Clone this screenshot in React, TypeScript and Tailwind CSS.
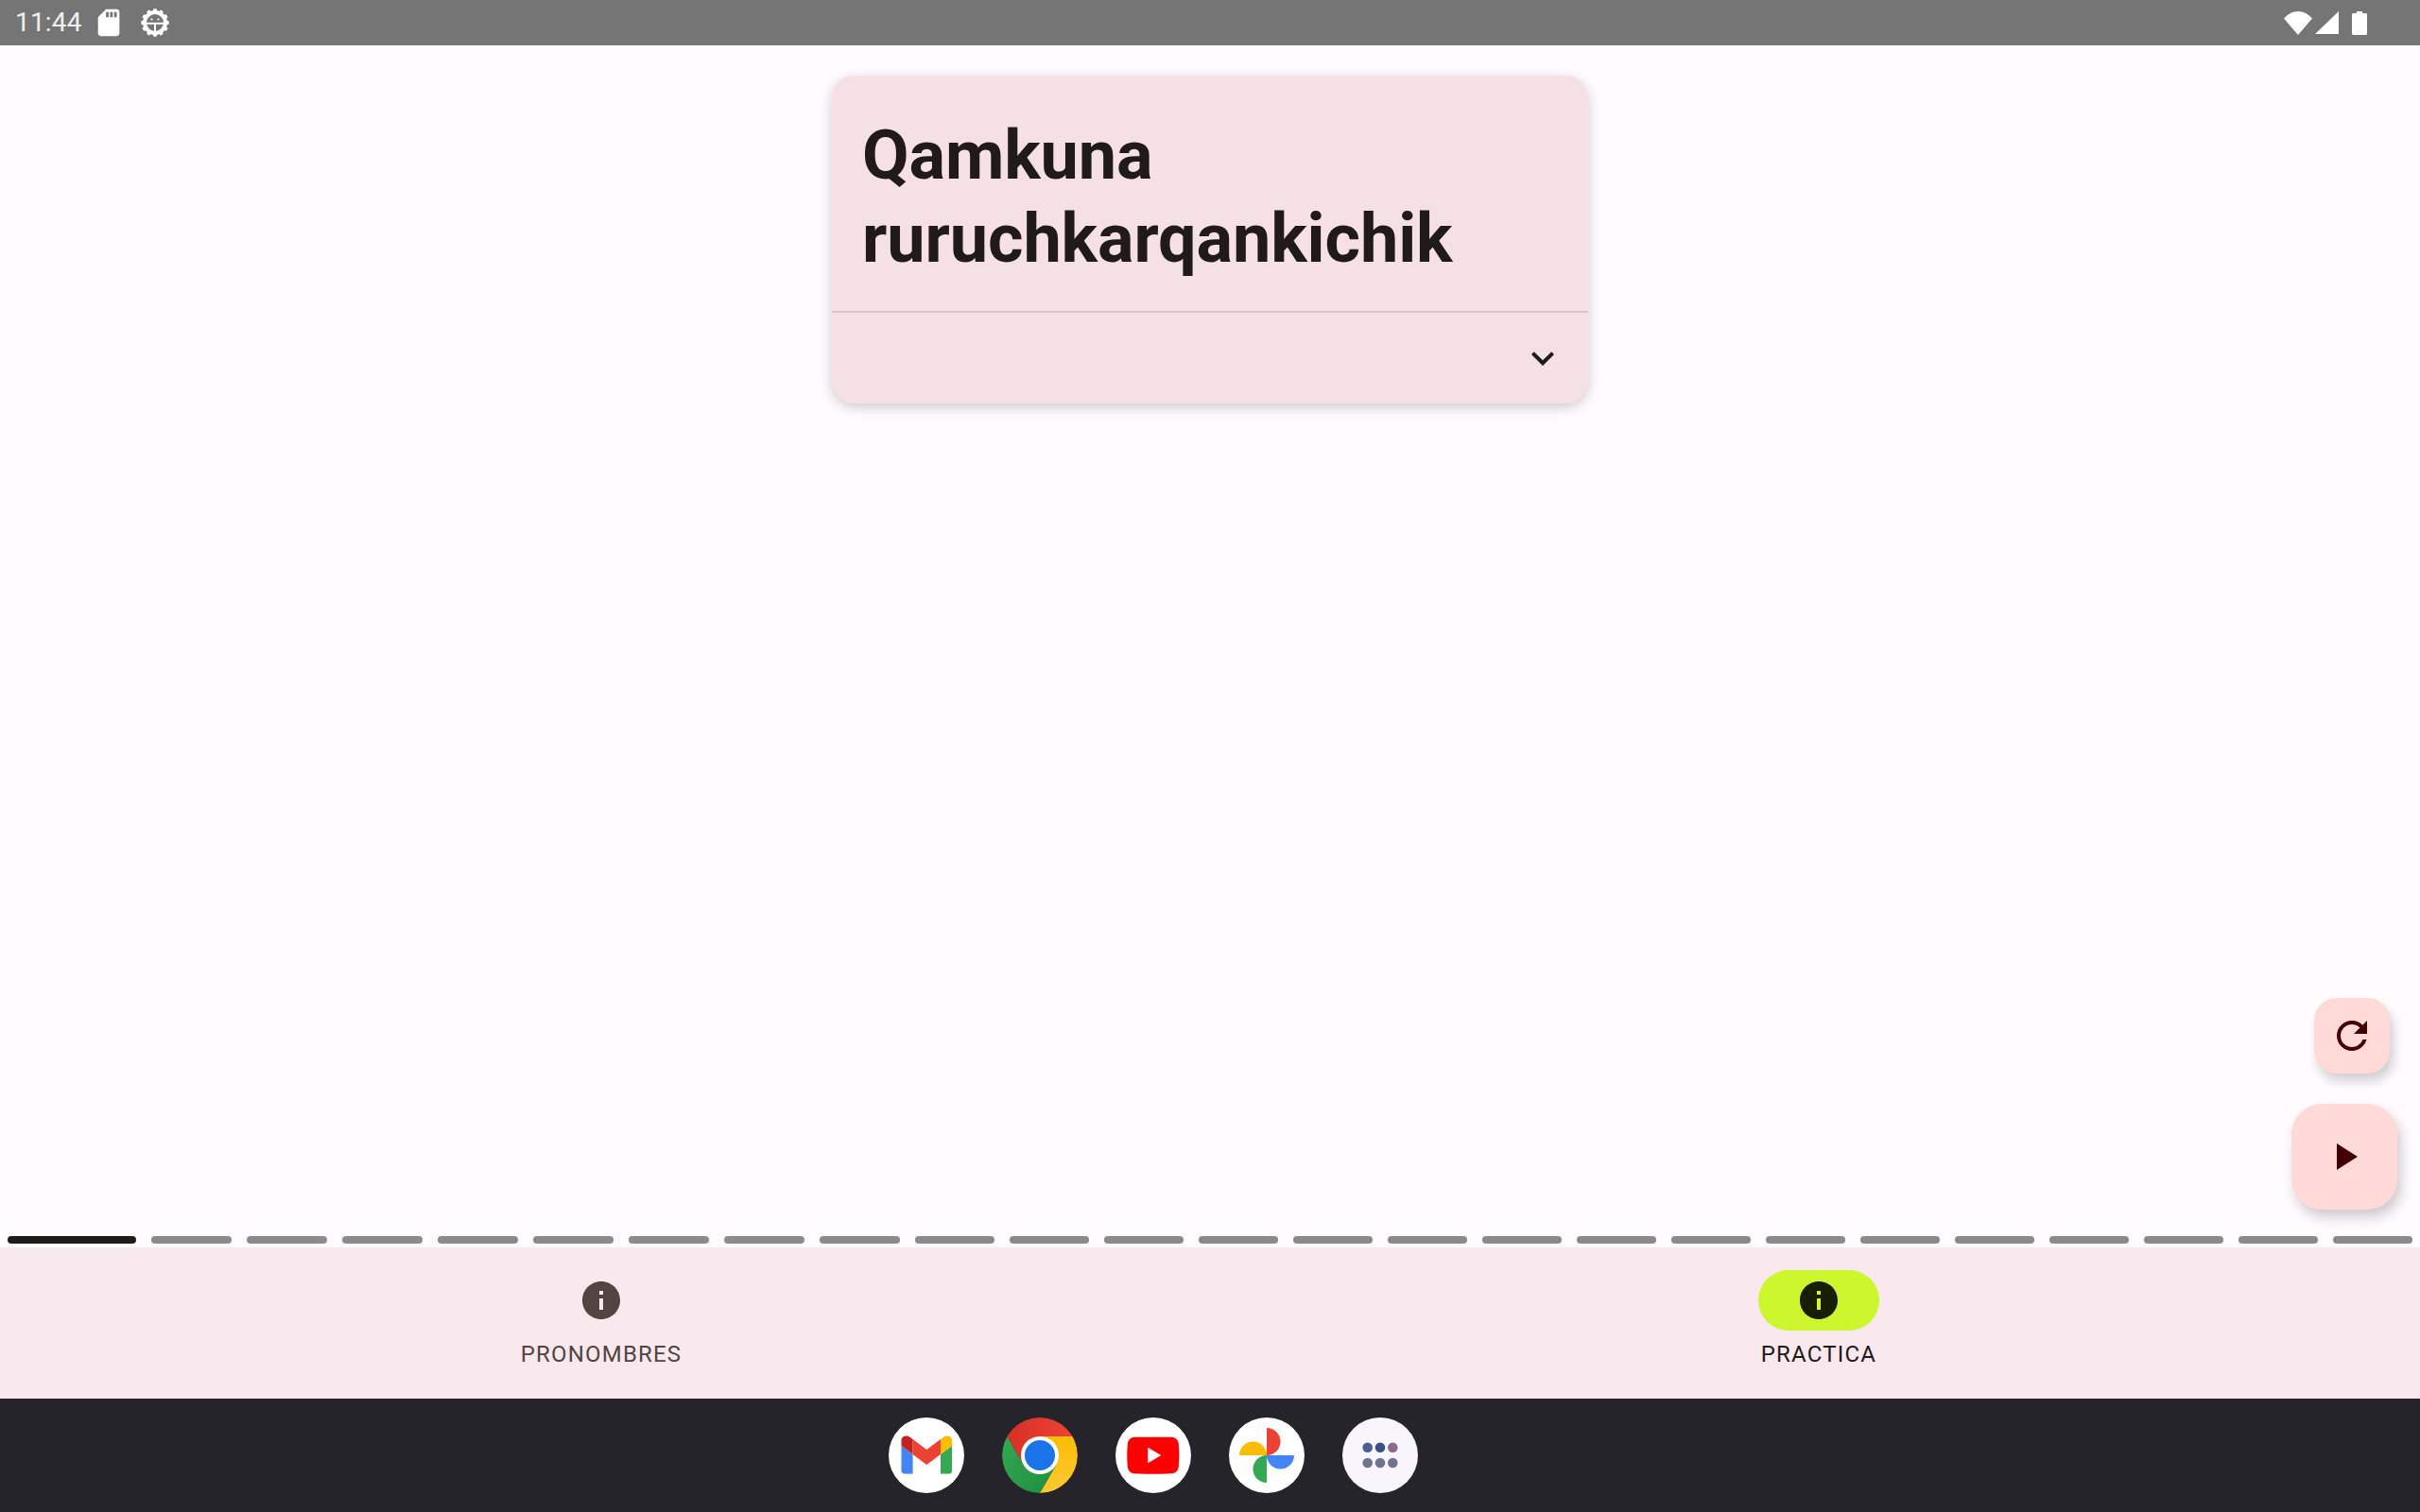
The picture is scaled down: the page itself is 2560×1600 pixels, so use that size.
import React from "react";

const INFO = "M12 2C6.48 2 2 6.48 2 12s4.48 10 10 10 10-4.48 10-10S17.52 2 12 2zm1 15h-2v-6h2v6zm0-8h-2V7h2v2z";

function Gear() {
  const teeth = Array.from({ length: 12 }, (_, i) => i * 30);
  return (
    <svg width="30" height="30" viewBox="0 0 30 30" className="ml-[17px]">
      {teeth.map((a) => (
        <rect key={a} x="13.200" y="0.300" width="3.600" height="5" fill="#fff" transform={`rotate(${a} 15 15)`} />
      ))}
      <circle cx="15" cy="15" r="11" fill="none" stroke="#fff" strokeWidth="4" />
      <rect x="5" y="14.800" width="20" height="2" fill="#fff" />
      <rect x="14" y="15" width="2" height="9" fill="#fff" />
      <circle cx="11.500" cy="11.500" r="1.100" fill="#fff" />
      <circle cx="18.500" cy="11.500" r="1.100" fill="#fff" />
    </svg>
  );
}

function Info({ color }: { color: string }) {
  return (
    <svg width="48" height="48" viewBox="0 0 24 24" fill={color} className="block">
      <path d={INFO} />
    </svg>
  );
}

function DockCircle({ children, bg = "bg-white" }: { children: React.ReactNode; bg?: string }) {
  return (
    <div className={`w-20 h-20 rounded-full overflow-hidden ${bg}`}>
      <svg width="80" height="80" viewBox="0 0 80 80" className="block">
        {children}
      </svg>
    </div>
  );
}

export default function App() {
  const segments = Array.from({ length: 24 }, (_, i) => i);
  return (
    <div className="w-[2560px] h-[1600px] flex flex-col overflow-hidden bg-[#fffbff] font-['Roboto',sans-serif]">
      {/* status bar */}
      <div className="h-12 shrink-0 bg-[#757575] flex items-center pl-[16px] pr-[56px] text-[#f0f0f0]">
        <span className="text-[28px] leading-none tracking-[0.2px] w-[70px]">11:44</span>
        <svg width="34" height="34" viewBox="0 0 24 24" fill="#fff" className="ml-[12px]">
          <path d="M18 2h-8L4.02 8 4 20c0 1.1.9 2 2 2h12c1.1 0 2-.9 2-2V4c0-1.1-.9-2-2-2zm-6 6h-2V4h2v4zm3 0h-2V4h2v4zm3 0h-2V4h2v4z" />
        </svg>
        <Gear />
        <div className="ml-auto flex items-center">
          <svg width="30" height="25" viewBox="0 0 30 25" fill="#fff">
            <path d="M0 7.500C4 3 9.200 0 15 0s11 3 15 7.500L15 25z" />
          </svg>
          <svg width="25" height="24" viewBox="0 0 25 24" fill="#fff" className="ml-[3px]">
            <path d="M25 0v24H0z" />
          </svg>
          <svg width="16" height="25" viewBox="0 0 16 25" fill="#fff" className="ml-[14px]">
            <path d="M5 0h6v2h3.500c.8 0 1.500.7 1.500 1.500V23.500c0 .8-.7 1.500-1.500 1.500h-13C.7 25 0 24.300 0 23.500V3.500C0 2.700.7 2 1.500 2H5z" />
          </svg>
        </div>
      </div>

      {/* main */}
      <div className="relative flex-1 flex flex-col">
        <div className="w-[800px] mx-auto mt-8 rounded-[24px] bg-[#f5e0e5] shadow-[0_4px_14px_rgba(0,0,0,0.2)] overflow-hidden">
          <div className="pt-[41px] pb-[32px] px-8 text-[72px] leading-[88px] font-bold tracking-[-0.1px] text-[#201a19]">
            <div>Qamkuna</div>
            <div>ruruchkarqankichik</div>
          </div>
          <div className="h-[2px] bg-[#dcc6c7]" />
          <div className="h-[96px] flex items-center justify-end pr-6">
            <svg width="48" height="48" viewBox="0 0 24 24" fill="#201a19">
              <path d="M16.590 8.590 12 13.170 7.410 8.590 6 10l6 6 6-6z" />
            </svg>
          </div>
        </div>

        {/* FABs */}
        <div className="absolute right-6 bottom-10 flex flex-col items-end gap-8">
          <button className="w-20 h-20 mr-2 rounded-[24px] bg-[#ffdad6] flex items-center justify-center shadow-[4px_8px_12px_rgba(0,0,0,0.18)]">
            <svg width="48" height="48" viewBox="0 0 24 24" fill="#410002">
              <path d="M17.650 6.350C16.200 4.900 14.210 4 12 4c-4.420 0-7.990 3.580-7.990 8s3.570 8 7.990 8c3.730 0 6.840-2.550 7.730-6h-2.080c-.82 2.330-3.040 4-5.650 4-3.310 0-6-2.690-6-6s2.690-6 6-6c1.660 0 3.140.69 4.220 1.780L13 11h7V4l-2.350 2.350z" />
            </svg>
          </button>
          <button className="w-28 h-28 rounded-[32px] bg-[#ffdad6] flex items-center justify-center shadow-[4px_8px_14px_rgba(0,0,0,0.2)]">
            <svg width="48" height="48" viewBox="0 0 24 24" fill="#410002">
              <path d="M8 5v14l11-7z" />
            </svg>
          </button>
        </div>

        {/* progress */}
        <div className="mt-auto mb-1 px-2 flex gap-4">
          <div className="w-[136px] h-2 rounded-full bg-[#201a19]" />
          {segments.map((i) => (
            <div key={i} className={i < 8 ? "w-[85px] h-2 rounded-full bg-[#8f8a8a]" : "w-[84px] h-2 rounded-full bg-[#8f8a8a]"} />
          ))}
        </div>
      </div>

      {/* tabs */}
      <div className="h-40 shrink-0 bg-[#f9e9ee] grid grid-cols-2 gap-4">
        <div className="flex flex-col items-center pt-6">
          <div className="w-32 h-16 rounded-full flex items-center justify-center">
            <Info color="#534341" />
          </div>
          <div className="mt-[9px] text-[24px] leading-[32px] font-normal tracking-[1.2px] text-[#534341]">PRONOMBRES</div>
        </div>
        <div className="flex flex-col items-center pt-6">
          <div className="w-32 h-16 rounded-full bg-[#ccf62e] flex items-center justify-center">
            <Info color="#181e00" />
          </div>
          <div className="mt-[9px] text-[24px] leading-[32px] font-normal tracking-[1.2px] text-[#201a19]">PRACTICA</div>
        </div>
      </div>

      {/* dock */}
      <div className="h-[120px] shrink-0 bg-[#24242a] flex items-center gap-10 pl-[940px]">
        <DockCircle>
          <svg x="13.300" y="19.300" width="54" height="40.500" viewBox="52 42 88 66">
            <path fill="#4285f4" d="M58 108h14V74L52 59v43c0 3.320 2.690 6 6 6" />
            <path fill="#34a853" d="M120 108h14c3.320 0 6-2.690 6-6V59l-20 15" />
            <path fill="#fbbc04" d="M120 48v26l20-15v-8c0-7.420-8.470-11.650-14.400-7.200" />
            <path fill="#ea4335" d="M72 74V48l24 18 24-18v26L96 92" />
            <path fill="#c5221f" d="M52 51v8l20 15V48l-5.600-4.200c-5.940-4.450-14.400-.22-14.400 7.200" />
          </svg>
        </DockCircle>
        <DockCircle bg="bg-transparent">
          <defs>
            <linearGradient id="chromeRed" x1="0" y1="0" x2="1" y2="0">
              <stop offset="0" stopColor="#d93025" />
              <stop offset="1" stopColor="#ea4335" />
            </linearGradient>
            <linearGradient id="chromeYellow" x1="0" y1="0" x2="0" y2="1">
              <stop offset="0" stopColor="#fbbc04" />
              <stop offset="1" stopColor="#fcc934" />
            </linearGradient>
            <linearGradient id="chromeGreen" x1="0" y1="0" x2="1" y2="1">
              <stop offset="0" stopColor="#34a853" />
              <stop offset="1" stopColor="#1e8e3e" />
            </linearGradient>
          </defs>
          <path fill="url(#chromeRed)" d="M74.640 20A40 40 0 0 0 5.360 20L22.680 50 40 20z" />
          <path fill="url(#chromeYellow)" d="M40 80A40 40 0 0 0 74.640 20H40L57.320 50z" />
          <path fill="url(#chromeGreen)" d="M5.360 20A40 40 0 0 0 40 80L57.320 50H22.680z" />
          <circle cx="40" cy="40" r="20" fill="#fff" />
          <circle cx="40" cy="40" r="16" fill="#1a73e8" />
        </DockCircle>
        <DockCircle>
          <path fill="#f00" d="M21 20.700H58.600C63.400 20.700 66.400 23.500 66.800 28 67.500 36 67.500 44 66.800 52 66.400 56.500 63.400 59.300 58.600 59.300 46 60 34 60 21 59.300 16.200 59.300 13.200 56.500 12.800 52 12.100 44 12.100 36 12.800 28 13.200 23.500 16.200 20.700 21 20.700z" />
          <path fill="#fff" d="M34.300 31.700v16.600L48.300 40z" />
        </DockCircle>
        <DockCircle>
          <path fill="#ea4335" d="M40 11a14.500 14.500 0 0 1 0 29z" />
          <path fill="#fbbc04" d="M11 40a14.500 14.500 0 0 1 29 0z" />
          <path fill="#4285f4" d="M40 40h29a14.500 14.500 0 0 1-29 0z" />
          <path fill="#34a853" d="M40 40v29a14.500 14.500 0 0 1 0-29z" />
        </DockCircle>
        <DockCircle bg="bg-[#f8f6fc]">
          <circle cx="26.700" cy="31.700" r="5.300" fill="#4a5e96" />
          <circle cx="40" cy="31.700" r="5.300" fill="#3d4f87" />
          <circle cx="53.300" cy="31.700" r="5.300" fill="#8b6a8f" />
          <circle cx="26.700" cy="48" r="5.300" fill="#6f7491" />
          <circle cx="40" cy="48" r="5.300" fill="#6f7491" />
          <circle cx="53.300" cy="48" r="5.300" fill="#6f7491" />
        </DockCircle>
      </div>
    </div>
  );
}
